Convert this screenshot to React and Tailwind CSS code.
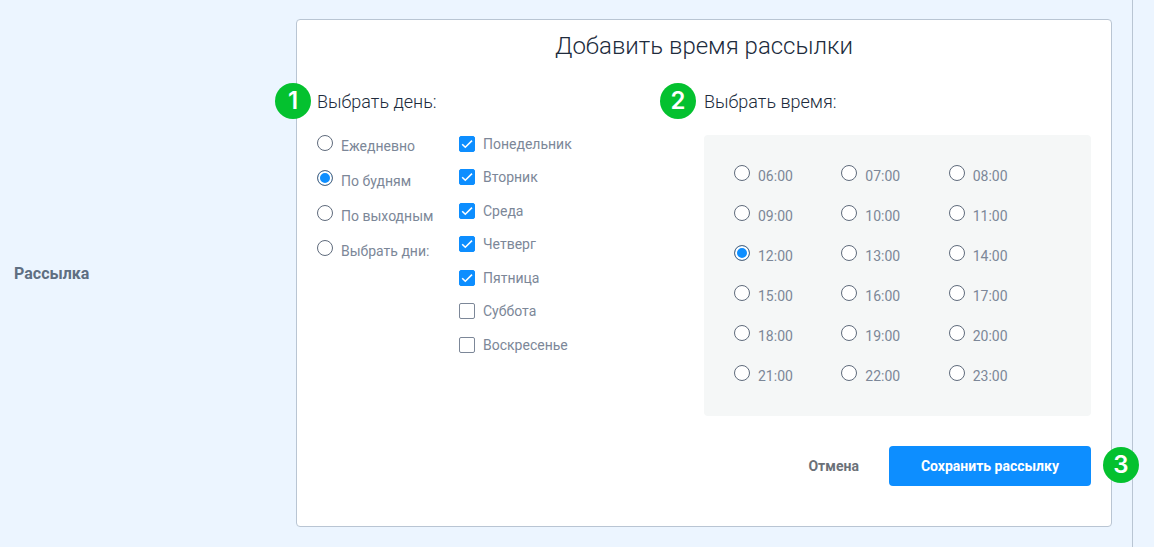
import { useState } from "react";

const MODES = [
  { id: "daily", label: "Ежедневно", days: [0, 1, 2, 3, 4, 5, 6] },
  { id: "weekdays", label: "По будням", days: [0, 1, 2, 3, 4] },
  { id: "weekend", label: "По выходным", days: [5, 6] },
  { id: "custom", label: "Выбрать дни:", days: null },
];

const DAYS = [
  "Понедельник",
  "Вторник",
  "Среда",
  "Четверг",
  "Пятница",
  "Суббота",
  "Воскресенье",
];

const TIMES = [
  "06:00", "07:00", "08:00",
  "09:00", "10:00", "11:00",
  "12:00", "13:00", "14:00",
  "15:00", "16:00", "17:00",
  "18:00", "19:00", "20:00",
  "21:00", "22:00", "23:00",
];

function Step({ number, className }) {
  return (
    <span
      className={`absolute flex size-9 items-center justify-center rounded-full bg-[#04c12f] font-[Inter] text-2xl font-semibold text-white ${className}`}
    >
      {number}
    </span>
  );
}

function Radio({ name, label, checked, onChange }) {
  return (
    <label className="flex h-5 cursor-pointer items-start gap-2 whitespace-nowrap">
      <input
        type="radio"
        name={name}
        checked={checked}
        onChange={onChange}
        className="size-4 shrink-0 appearance-none rounded-full border border-[#5f6b7c] bg-white checked:bg-[#0d8eff] checked:shadow-[inset_0_0_0_2px_#fff]"
      />
      <span className="leading-[22px]">{label}</span>
    </label>
  );
}

function Checkbox({ label, checked, onChange }) {
  return (
    <label className="flex h-[18px] cursor-pointer items-center gap-2">
      <span className="relative size-4 shrink-0">
        <input
          type="checkbox"
          checked={checked}
          onChange={onChange}
          className="block size-4 appearance-none rounded-xs border border-[#7c8798] bg-white checked:border-[#0d8eff] checked:bg-[#0d8eff]"
        />
        {checked && (
          <svg
            viewBox="0 0 16 16"
            fill="none"
            stroke="white"
            strokeWidth="1.6"
            className="pointer-events-none absolute inset-0 size-4"
          >
            <path d="M3.2 8.2 6.3 11.2 13 4.6" />
          </svg>
        )}
      </span>
      <span>{label}</span>
    </label>
  );
}

export default function App() {
  const [mode, setMode] = useState("weekdays");
  const [days, setDays] = useState([0, 1, 2, 3, 4]);
  const [time, setTime] = useState("12:00");

  const selectMode = (item) => {
    setMode(item.id);
    if (item.days) setDays(item.days);
  };

  const toggleDay = (index) => {
    setMode("custom");
    setDays(
      days.includes(index)
        ? days.filter((day) => day !== index)
        : [...days, index]
    );
  };

  return (
    <div className="min-h-screen bg-[#ecf5ff] pr-[21px] font-[Roboto,sans-serif] text-sm text-[#7c8798]">
      <div className="flex min-h-screen items-center border-r border-[#b9c5d3] pr-5">
        <div className="w-[296px] shrink-0 pl-[14px] text-base font-bold text-[#5f6f82]">
          Рассылка
        </div>

        <form
          onSubmit={(e) => e.preventDefault()}
          className="mb-0.5 min-w-0 grow rounded border border-[#b9c5d3] bg-white px-5 pt-2 pb-10"
        >
          <h2 className="text-center text-2xl leading-9 font-light text-[#202b3c]">
            Добавить время рассылки
          </h2>

          <div className="mt-6 grid grid-cols-2">
            <section>
              <h3 className="relative text-lg leading-7 font-light text-[#202b3c]">
                <Step number={1} className="-top-[5px] -left-[42px]" />
                Выбрать день:
              </h3>
              <div className="mt-[19px] flex">
                <div className="flex w-[142px] flex-col gap-[15px]">
                  {MODES.map((item) => (
                    <Radio
                      key={item.id}
                      name="mode"
                      label={item.label}
                      checked={mode === item.id}
                      onChange={() => selectMode(item)}
                    />
                  ))}
                </div>
                <div className="flex h-[219px] flex-col justify-between">
                  {DAYS.map((day, index) => (
                    <Checkbox
                      key={day}
                      label={day}
                      checked={days.includes(index)}
                      onChange={() => toggleDay(index)}
                    />
                  ))}
                </div>
              </div>
            </section>

            <section>
              <h3 className="relative text-lg leading-7 font-light text-[#202b3c]">
                <Step number={2} className="-top-[5px] -left-11" />
                Выбрать время:
              </h3>
              <div className="mt-[19px] rounded bg-[#f5f7f7] py-[30px] pr-[35px] pl-[30px]">
                <div className="grid h-[221px] grid-cols-3 content-between">
                  {TIMES.map((item) => (
                    <Radio
                      key={item}
                      name="time"
                      label={item}
                      checked={time === item}
                      onChange={() => setTime(item)}
                    />
                  ))}
                </div>
              </div>
            </section>
          </div>

          <div className="relative mt-[30px] flex items-center justify-end gap-[30px] font-bold">
            <button type="button" className="cursor-pointer text-[#6b7178]">
              Отмена
            </button>
            <button
              type="submit"
              className="h-10 cursor-pointer rounded-sm bg-[#0d8eff] px-8 text-white"
            >
              Сохранить рассылку
            </button>
            <Step number={3} className="top-px -right-12" />
          </div>
        </form>
      </div>
    </div>
  );
}
